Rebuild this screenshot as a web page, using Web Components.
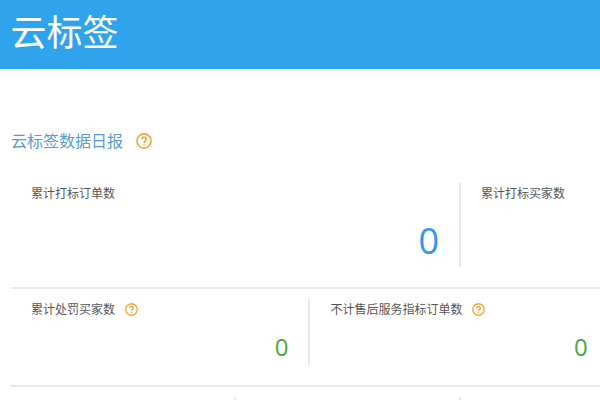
<!DOCTYPE html>
<html lang="zh">
<head>
<meta charset="utf-8">
<title>云标签</title>
<style>
  html, body { margin: 0; height: 100%; overflow: hidden; background: #fff; }
  body { font-family: "Noto Sans CJK SC", "Noto Sans", sans-serif; }
  stat-grid { margin-left: 11px; }
</style>
</head>
<body>
<app-header>云标签</app-header>
<section-title>云标签数据日报</section-title>
<stat-grid>
  <stat-row>
    <stat-cell columns="2" size="large" value="0">累计打标订单数</stat-cell>
    <stat-cell columns="2" size="large">累计打标买家数</stat-cell>
  </stat-row>
  <stat-row>
    <stat-cell columns="3" value="0" help>累计处罚买家数</stat-cell>
    <stat-cell columns="3" value="0" help>不计售后服务指标订单数</stat-cell>
    <stat-cell columns="3"></stat-cell>
  </stat-row>
  <stat-row>
    <stat-cell columns="4"></stat-cell>
    <stat-cell columns="4"></stat-cell>
    <stat-cell columns="4"></stat-cell>
    <stat-cell columns="4"></stat-cell>
  </stat-row>
</stat-grid>

<script>
class AppHeader extends HTMLElement {
  constructor(){
    super();
    this.attachShadow({mode: 'open'});
    this.shadowRoot.innerHTML = `
      <style>
        :host {
          display: block;
          height: 69px;
          padding-left: 10.5px;
          background: #2fa4ec;
          color: #fff;
          font-size: 36px;
          line-height: 60px;
        }
      </style>
      <slot></slot>
    `;
  }
}

class HelpIcon extends HTMLElement {
  constructor(){
    super();
    this.attachShadow({mode: 'open'});
    this.shadowRoot.innerHTML = `
      <style>
        :host { display: inline-flex; width: var(--help-size, 16px); height: var(--help-size, 16px); }
        svg { width: 100%; height: 100%; }
      </style>
      <svg viewBox="0 0 16 16" fill="none" stroke="#f5a431" stroke-width="1.6">
        <circle cx="8" cy="8" r="7.1"/>
        <path d="M5.8 6.3a2.2 2.2 0 1 1 3.5 1.8c-.9.6-1.3 1-1.3 2"/>
        <path d="M8 11.2v1.3"/>
      </svg>
    `;
  }
}

class SectionTitle extends HTMLElement {
  constructor(){
    super();
    this.attachShadow({mode: 'open'});
    this.shadowRoot.innerHTML = `
      <style>
        :host {
          display: flex;
          align-items: center;
          gap: 13px;
          height: 24px;
          padding: 59px 0 19px 11px;
          color: #5b9bd0;
          font-size: 16px;
        }
        help-icon { margin-top: 2px; }
      </style>
      <slot></slot>
      <help-icon></help-icon>
    `;
  }
}

class StatGrid extends HTMLElement {
  constructor(){
    super();
    this.attachShadow({mode: 'open'});
    this.shadowRoot.innerHTML = `
      <style>
        :host { display: block; width: 900px; }
      </style>
      <slot></slot>
    `;
  }
}

class StatRow extends HTMLElement {
  constructor(){
    super();
    this.attachShadow({mode: 'open'});
    this.shadowRoot.innerHTML = `
      <style>
        :host {
          display: flex;
          padding: 10px 0 20px;
          border-bottom: 2px solid #e8e8e8;
        }
      </style>
      <slot></slot>
    `;
  }
}

class StatCell extends HTMLElement {
  constructor(){
    super();
    this.attachShadow({mode: 'open'});
  }

  connectedCallback(){
    const columns = parseInt(this.getAttribute("columns") || "1");
    const large = this.getAttribute("size") === "large";
    const value = this.getAttribute("value");
    const help = this.hasAttribute("help");
    // the three-up row sits a hair narrower than 900/3 in the reference
    const width = columns === 3 ? 299.4 : 900 / columns;
    this.shadowRoot.innerHTML = `
      <style>
        :host {
          display: flex;
          flex-direction: column;
          box-sizing: border-box;
          width: ${width}px;
          height: ${large ? 84 : 66}px;
          margin-top: ${large ? 2 : 0}px;
          padding: 0 20px;
          border-right: 2px solid #e8e8e8;
        }
        .label {
          display: flex;
          align-items: center;
          gap: 10px;
          height: 18px;
          color: #555;
          font-size: 12px;
          --help-size: 13px;
        }
        help-icon { margin-top: 2px; }
        .value {
          margin-top: auto;
          margin-bottom: 1px;
          text-align: right;
          font-family: "Open Sans", sans-serif;
          font-size: ${large ? 36 : 24}px;
          line-height: ${large ? 50 : 34}px;
          color: ${large ? "#3596ec" : "#4ba63d"};
        }
      </style>
      <div class="label"><span><slot></slot></span>${help ? "<help-icon></help-icon>" : ""}</div>
      ${value !== null ? `<div class="value">${value}</div>` : ""}
    `;
  }
}

customElements.define('app-header', AppHeader);
customElements.define('help-icon', HelpIcon);
customElements.define('section-title', SectionTitle);
customElements.define('stat-grid', StatGrid);
customElements.define('stat-row', StatRow);
customElements.define('stat-cell', StatCell);
</script>
</body>
</html>
